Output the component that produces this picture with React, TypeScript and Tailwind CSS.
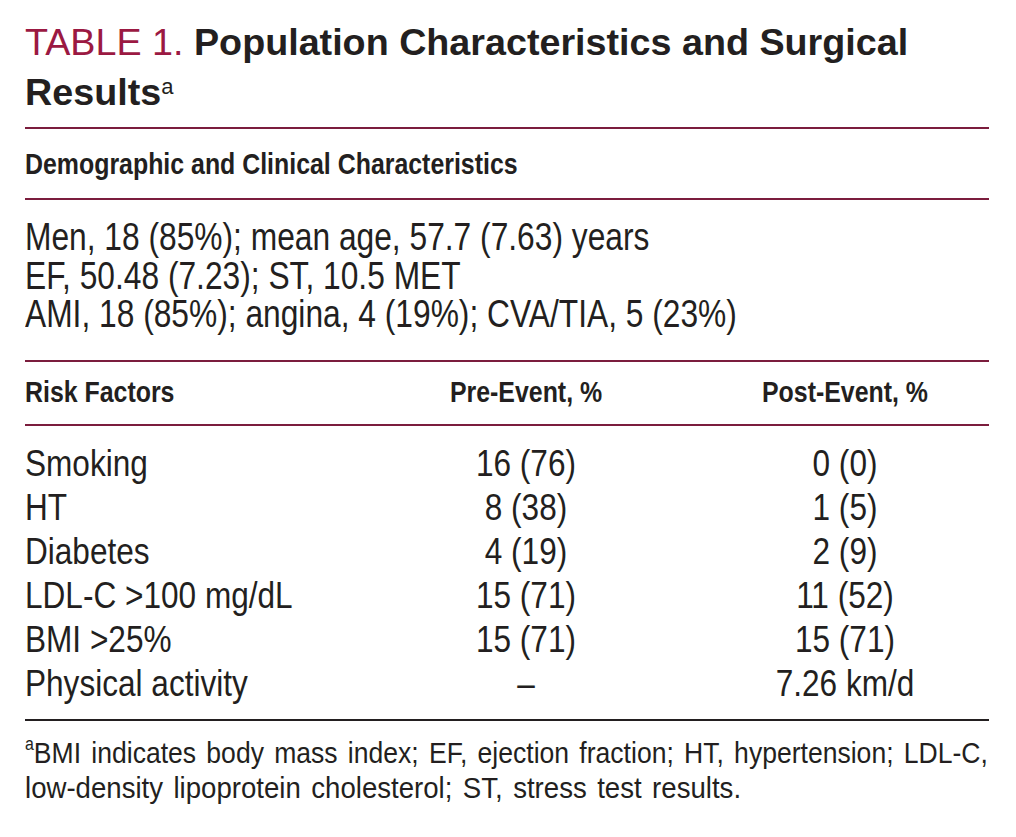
// Helvetica Condensed is not available: Liberation Sans squeezed horizontally stands in for it.
const sans = "font-['Liberation_Sans',Arial,sans-serif]";

type Row = {
  label: string;
  pre: string;
  post: string;
};

const rows: Row[] = [
  { label: "Smoking", pre: "16 (76)", post: "0 (0)" },
  { label: "HT", pre: "8 (38)", post: "1 (5)" },
  { label: "Diabetes", pre: "4 (19)", post: "2 (9)" },
  { label: "LDL-C >100 mg/dL", pre: "15 (71)", post: "11 (52)" },
  { label: "BMI >25%", pre: "15 (71)", post: "15 (71)" },
  { label: "Physical activity", pre: "–", post: "7.26 km/d" },
];

const cols = "grid grid-cols-[326px_350px_288px]";

type TextProps = {
  children: React.ReactNode;
  squeeze?: string;
};

function Left({ children, squeeze = "scale-x-[0.83]" }: TextProps) {
  return (
    <span className={`block origin-left whitespace-nowrap ${squeeze}`}>
      {children}
    </span>
  );
}

function Center({ children, squeeze = "scale-x-[0.83]" }: TextProps) {
  return (
    <span className={`block text-center whitespace-nowrap ${squeeze}`}>
      {children}
    </span>
  );
}

export default function App() {
  return (
    <main className={`${sans} min-h-screen overflow-hidden bg-white px-[25px] text-[#231f20]`}>
      <div className="w-[964px]">
        <h1 className="pt-[17px] pb-[10px] text-[37.7px] leading-[50px] font-bold">
          <span className="font-normal text-[#9b1942]">TABLE 1. </span>
          Population Characteristics and Surgical Results
          <sup className="text-[22px] font-normal">a</sup>
        </h1>

        <div className="h-[2px] bg-[#7b1d3d]" />
        <h2 className="pt-[17px] pb-[16px] text-[30px] leading-[36px] font-bold">
          <Left>Demographic and Clinical Characteristics</Left>
        </h2>
        <div className="h-[2px] bg-[#7b1d3d]" />

        {/* summary lines */}
        <div className="pt-[18px] pb-[26px] text-[38px] leading-[38.5px]">
          <Left squeeze="scale-x-[0.835]">Men, 18 (85%); mean age, 57.7 (7.63) years</Left>
          <Left squeeze="scale-x-[0.835]">EF, 50.48 (7.23); ST, 10.5 MET</Left>
          <Left squeeze="scale-x-[0.835]">AMI, 18 (85%); angina, 4 (19%); CVA/TIA, 5 (23%)</Left>
        </div>

        <div className="h-[2px] bg-[#7b1d3d]" />
        <div className={`${cols} pt-[12px] pb-[14px] text-[30px] leading-[36px] font-bold`}>
          <Left>Risk Factors</Left>
          <Center>Pre-Event, %</Center>
          <Center>Post-Event, %</Center>
        </div>
        <div className="h-[2px] bg-[#7b1d3d]" />

        <div className="pt-[16px] pb-[13px] text-[36px] leading-[44px]">
          {rows.map((r) => (
            <div key={r.label} className={cols}>
              <Left squeeze="scale-x-[0.877]">{r.label}</Left>
              <Center squeeze="scale-x-[0.877]">{r.pre}</Center>
              <Center squeeze="scale-x-[0.877]">{r.post}</Center>
            </div>
          ))}
        </div>
        <div className="h-[2px] bg-[#231f20]" />

        {/* footnote: first line set justified to the rule's width */}
        <div className="pt-[14px] text-[30px] leading-[35px]">
          <span className="block w-[1088px] origin-left scale-x-[0.885] [text-align-last:justify] whitespace-nowrap">
            <sup className="top-[-0.7em] text-[18px]">a</sup>
            BMI indicates body mass index; EF, ejection fraction; HT, hypertension; LDL-C,
          </span>
          <Left squeeze="scale-x-[0.92] [word-spacing:3px]">
            low-density lipoprotein cholesterol; ST, stress test results.
          </Left>
        </div>
      </div>
    </main>
  );
}
